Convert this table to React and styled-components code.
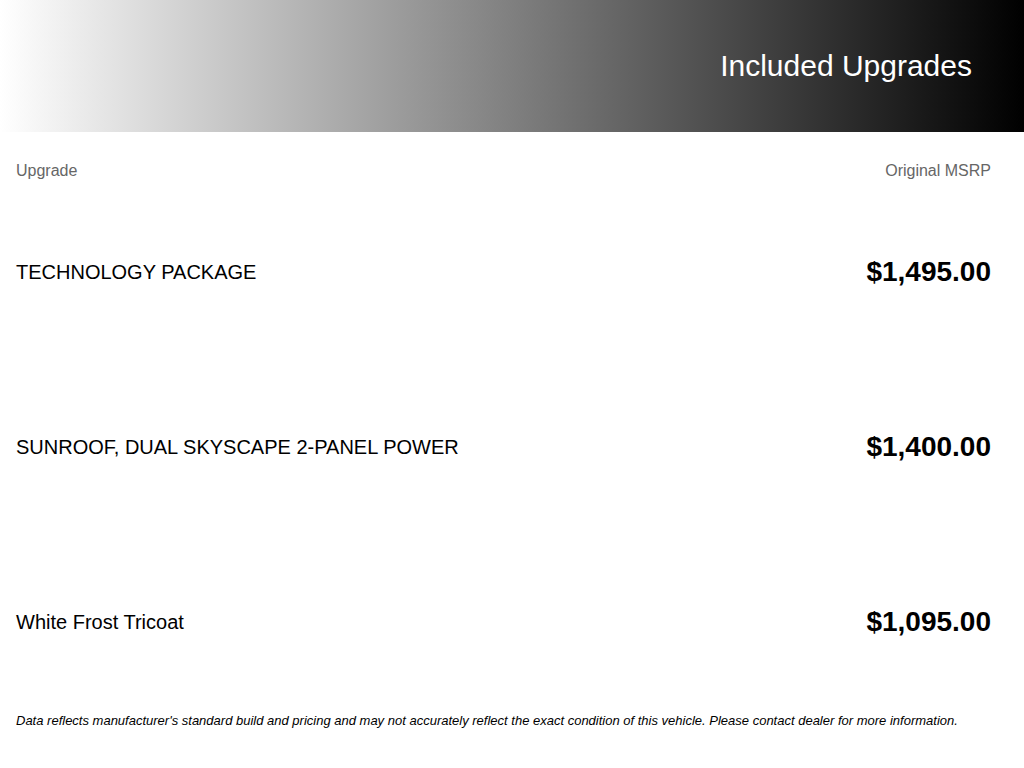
import styled, { createGlobalStyle } from "styled-components";

const GlobalStyle = createGlobalStyle`
  html, body {
    margin: 0;
    padding: 0;
    background: #fff;
    font-family: "Liberation Sans", Arial, sans-serif;
  }
`;

const upgrades = [
  { name: "TECHNOLOGY PACKAGE", price: "$1,495.00" },
  { name: "SUNROOF, DUAL SKYSCAPE 2-PANEL POWER", price: "$1,400.00" },
  { name: "White Frost Tricoat", price: "$1,095.00" },
];

const App = () => {
  return (
    <>
      <GlobalStyle />
      <Page>
        <Banner>
          <Title>Included Upgrades</Title>
        </Banner>
        <Table>
          <LabelRow>
            <Label>Upgrade</Label>
            <Label>Original MSRP</Label>
          </LabelRow>
          {upgrades.map((u) => (
            <ItemRow key={u.name}>
              <ItemName>{u.name}</ItemName>
              <Price>{u.price}</Price>
            </ItemRow>
          ))}
          <Disclaimer>
            Data reflects manufacturer's standard build and pricing and may not
            accurately reflect the exact condition of this vehicle. Please
            contact dealer for more information.
          </Disclaimer>
        </Table>
      </Page>
    </>
  );
};

const Page = styled.div`
  width: 1024px;
  min-height: 768px;
`;

const Banner = styled.header`
  height: 132px;
  display: flex;
  align-items: center;
  justify-content: flex-end;
  padding-right: 52px;
  box-sizing: border-box;
  background: linear-gradient(to right, #ffffff 0%, #000000 100%);
`;

const Title = styled.h1`
  margin: 0;
  font-size: 30px;
  font-weight: 400;
  color: #fff;
`;

const Table = styled.section`
  padding: 0 33px 0 16px;
`;

const LabelRow = styled.div`
  display: flex;
  justify-content: space-between;
  align-items: center;
  padding-top: 29px;
  height: 20px;
  margin-bottom: 4px;
`;

const Label = styled.span`
  font-size: 16px;
  color: #666;
`;

const ItemRow = styled.div`
  display: flex;
  justify-content: space-between;
  align-items: center;
  height: 175px;
`;

const ItemName = styled.span`
  font-size: 20px;
  color: #000;
`;

const Price = styled.span`
  font-size: 28px;
  font-weight: 700;
  color: #000;
  margin-top: -2px;
`;

const Disclaimer = styled.p`
  margin: 3px 0 0;
  font-size: 13px;
  line-height: 15px;
  font-style: italic;
  color: #000;
`;

export default App;
